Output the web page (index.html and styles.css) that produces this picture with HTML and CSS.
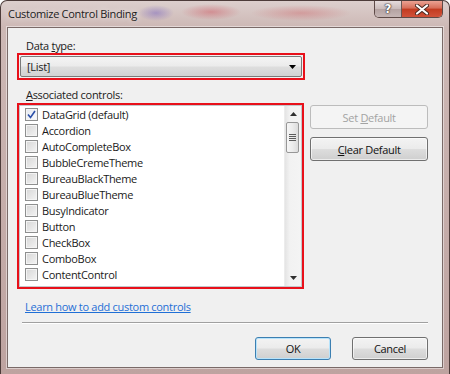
FILE: index.html
```html
<!DOCTYPE html>
<html>
<head>
<meta charset="utf-8">
<link rel="stylesheet" href="styles.css">
</head>
<body>
<div class="window">
  <div class="titlebar">
    <span class="title">Customize Control Binding</span>
    <div class="caption">
      <div class="cap help">?</div>
      <div class="cap close">
        <svg width="14" height="11" viewBox="0 0 14 11"><path d="M2 1.5 L12 9.5 M12 1.5 L2 9.5" stroke="#4a2a22" stroke-width="4" stroke-linecap="round"/><path d="M2 1.5 L12 9.5 M12 1.5 L2 9.5" stroke="#ffffff" stroke-width="2.2" stroke-linecap="round"/></svg>
      </div>
    </div>
  </div>
  <div class="client">
    <div class="label">Data <u>t</u>ype:</div>
    <div class="hl combo-hl">
      <div class="combo">
        <span class="combo-text">[List]</span>
        <svg class="combo-arrow" width="7" height="4" viewBox="0 0 7 4"><path d="M0 0 H7 L3.5 4 Z" fill="#000"/></svg>
      </div>
    </div>
    <div class="label label2"><u>A</u>ssociated controls:</div>
    <div class="list-row">
      <div class="hl list-hl">
        <div class="listbox">
          <ul class="items">
            <li class="item"><span class="check checked"><svg width="9" height="9" viewBox="0 0 9 9"><path d="M1 4.5 L3.5 7.5 L8 1" stroke="#2a4fa8" stroke-width="1.6" fill="none"/></svg></span><span>DataGrid (default)</span></li>
            <li class="item"><span class="check"></span><span>Accordion</span></li>
            <li class="item"><span class="check"></span><span>AutoCompleteBox</span></li>
            <li class="item"><span class="check"></span><span>BubbleCremeTheme</span></li>
            <li class="item"><span class="check"></span><span>BureauBlackTheme</span></li>
            <li class="item"><span class="check"></span><span>BureauBlueTheme</span></li>
            <li class="item"><span class="check"></span><span>BusyIndicator</span></li>
            <li class="item"><span class="check"></span><span>Button</span></li>
            <li class="item"><span class="check"></span><span>CheckBox</span></li>
            <li class="item"><span class="check"></span><span>ComboBox</span></li>
            <li class="item"><span class="check"></span><span>ContentControl</span></li>
          </ul>
          <div class="scrollbar">
            <div class="sb-btn"><svg width="7" height="4" viewBox="0 0 7 4"><path d="M0 4 H7 L3.5 0 Z" fill="#303030"/></svg></div>
            <div class="sb-thumb"><span class="grip"></span></div>
            <div class="sb-track"></div>
            <div class="sb-btn"><svg width="7" height="4" viewBox="0 0 7 4"><path d="M0 0 H7 L3.5 4 Z" fill="#303030"/></svg></div>
          </div>
        </div>
      </div>
      <div class="side-buttons">
        <div class="btn disabled"><span>Set <u>D</u>efault</span></div>
        <div class="btn"><span><u>C</u>lear Default</span></div>
      </div>
    </div>
    <a class="link">Learn how to add custom controls</a>
    <div class="separator"></div>
    <div class="footer">
      <div class="btn dlg default"><span>OK</span></div>
      <div class="btn dlg"><span>Cancel</span></div>
    </div>
  </div>
</div>
</body>
</html>
```
FILE: styles.css
```css
* { box-sizing: border-box; }
html, body {
  margin: 0;
  padding: 0;
  background: #ffffff;
}
body {
  font-family: "Open Sans", "Noto Sans", sans-serif;
  font-size: 11px;
  letter-spacing: -0.3px;
  color: #1a1a1a;
}
u { text-decoration: underline; text-underline-offset: 1px; }

.window {
  width: 450px;
  height: 374px;
  border: 1px solid #4d3c3a;
  border-bottom: 0;
  border-radius: 7px 7px 0 0;
  padding: 0 6px 6px 6px;
  display: flex;
  flex-direction: column;
  background:
    radial-gradient(ellipse 18px 8px at 155px 12px, rgba(120, 100, 190, 0.5), rgba(120, 100, 190, 0)),
    radial-gradient(ellipse 30px 8px at 210px 11px, rgba(205, 90, 100, 0.5), rgba(205, 90, 100, 0)),
    radial-gradient(ellipse 50px 8px at 300px 12px, rgba(205, 95, 100, 0.4), rgba(205, 95, 100, 0)),
    linear-gradient(180deg, #dccfcd 0px, #cdb8b5 26px, #bea3a0 100%);
}

.titlebar {
  height: 26px;
  display: flex;
  align-items: flex-start;
}
.title {
  padding-top: 5px;
  padding-left: 1px;
  font-size: 11px;
  color: #1c1c1c;
  text-shadow: 0 0 6px rgba(255, 255, 255, 0.9);
}
.caption {
  margin-left: auto;
  display: flex;
  height: 17px;
  border: 1px solid #5e4a47;
  border-top: 0;
  border-radius: 0 0 5px 5px;
  overflow: hidden;
}
.cap {
  height: 16px;
  display: flex;
  align-items: center;
  justify-content: center;
}
.help {
  width: 27px;
  border-right: 1px solid #6b5754;
  background: linear-gradient(180deg, #e6dcdc 0%, #c9bab9 50%, #b4a2a1 51%, #c6b6b5 100%);
  color: #ffffff;
  font-family: "DejaVu Sans", sans-serif;
  font-weight: bold;
  font-size: 12px;
  letter-spacing: 0;
  text-shadow: 0 0 1px #3a2e2e, 0 0 1px #3a2e2e, 0 0 2px #3a2e2e;
}
.close {
  width: 40px;
  background: linear-gradient(180deg, #eba293 0%, #d66d58 45%, #c23b20 50%, #d1523a 100%);
}

.client {
  flex: 1;
  background: #f0f0f0;
  border: 1px solid #7a6a68;
  box-shadow: 0 0 0 1px rgba(255, 255, 255, 0.45);
  padding: 10px 14px 0 9px;
  display: flex;
  flex-direction: column;
}

.label {
  height: 15px;
  line-height: 15px;
  padding-left: 9px;
}
.label2 {
  margin-top: 7px;
  height: 16px;
}

.hl {
  border: 2px solid #e8101a;
}
.combo-hl {
  width: 288px;
  height: 27px;
  padding: 1px;
}
.combo {
  height: 21px;
  border: 1px solid #7a7a7a;
  border-radius: 2px;
  background: linear-gradient(180deg, #f4f4f4 0%, #ebebeb 48%, #dedede 52%, #d2d2d2 100%);
  display: flex;
  align-items: center;
  padding: 0 5px 0 6px;
}
.combo-text { flex: 1; line-height: 19px; }
.combo-arrow { display: block; }

.list-row {
  display: flex;
  align-items: flex-start;
}
.list-hl {
  width: 288px;
  height: 186px;
}
.listbox {
  height: 100%;
  border: 1px solid #c4c8cc;
  background: #ffffff;
  display: flex;
}
.items {
  list-style: none;
  margin: 0;
  padding: 0 0 0 5px;
  flex: 1;
}
.item {
  height: 16px;
  display: flex;
  align-items: center;
  white-space: nowrap;
}
.check {
  width: 13px;
  height: 13px;
  margin-right: 4px;
  border: 1px solid #8e8f8f;
  background: linear-gradient(135deg, #d6d6d6 0%, #f4f4f4 100%);
  box-shadow: inset 0 0 0 1px #f4f4f4;
  display: flex;
  align-items: center;
  justify-content: center;
}
.check.checked {
  background: linear-gradient(135deg, #e4e8f0 0%, #fafbfd 100%);
}
.check svg { display: block; }

.scrollbar {
  width: 17px;
  display: flex;
  flex-direction: column;
  background: linear-gradient(90deg, #e4e4e4 0%, #f2f2f2 30%, #f4f4f4 100%);
  border-left: 1px solid #ececec;
}
.sb-btn {
  height: 16px;
  display: flex;
  align-items: center;
  justify-content: center;
}
.sb-btn svg { display: block; }
.sb-thumb {
  height: 31px;
  margin: 0 2px 0 1px;
  border: 1px solid #979797;
  border-radius: 2px;
  background: linear-gradient(90deg, #f6f6f6 0%, #ececec 50%, #dcdcdc 100%);
  display: flex;
  align-items: center;
  justify-content: center;
}
.grip {
  width: 7px;
  height: 7px;
  background: repeating-linear-gradient(180deg, #5c5c5c 0px, #5c5c5c 1px, transparent 1px, transparent 2px);
}
.sb-track { flex: 1; }

.side-buttons {
  margin-left: 6px;
  margin-top: 2px;
  width: 118px;
  display: flex;
  flex-direction: column;
  gap: 8px;
}
.btn {
  height: 24px;
  border: 1px solid #707070;
  border-radius: 3px;
  background: linear-gradient(180deg, #f3f3f3 0%, #ebebeb 48%, #dddddd 52%, #cfcfcf 100%);
  box-shadow: inset 0 0 0 1px rgba(255, 255, 255, 0.6);
  display: flex;
  align-items: center;
  justify-content: center;
  color: #111;
}
.btn.disabled {
  border-color: #bcbcbc;
  background: #f4f4f4;
  color: #a3a3a3;
  box-shadow: none;
}

.link {
  margin-top: 10px;
  margin-left: 8px;
  height: 16px;
  line-height: 16px;
  color: #1f6fd6;
  text-decoration: underline;
  align-self: flex-start;
}
.separator {
  margin-top: 7px;
  margin-left: 5px;
  height: 2px;
  border-top: 1px solid #a0a0a0;
  border-bottom: 1px solid #ffffff;
}
.footer {
  margin-top: 13px;
  display: flex;
  justify-content: flex-end;
  gap: 21px;
}
.btn.dlg {
  width: 76px;
  height: 23px;
}
.btn.default {
  border-color: #3c7fb1;
  box-shadow: inset 0 0 0 1px #b7e3fb;
}
```
